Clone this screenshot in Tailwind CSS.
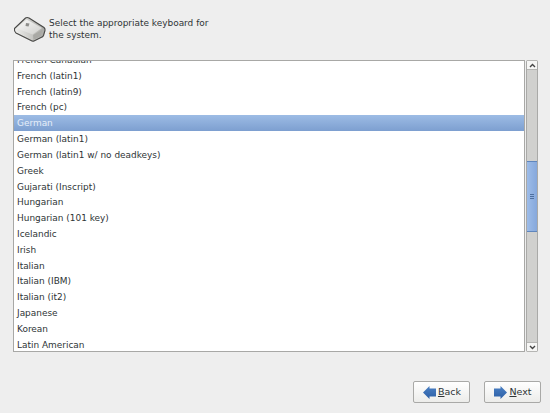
<!DOCTYPE html>
<html lang="en">
<head>
  <meta charset="UTF-8">
  <title>Keyboard</title>
  <script src="https://cdn.jsdelivr.net/npm/@tailwindcss/browser@4"></script>
</head>
<body class="bg-[#eeeeee] w-[550px] h-[413px] overflow-hidden font-['DejaVu_Sans',sans-serif] text-[8.95px] text-[#2e3436]">

  <!-- Header -->
  <div class="h-[60px] pl-[13px] pt-[15px] flex items-start">
    <svg width="34" height="28" viewBox="0 0 34 28" class="shrink-0">
      <defs>
        <linearGradient id="cap" x1="0" y1="0" x2="1" y2="1">
          <stop offset="0" stop-color="#fafafa"/>
          <stop offset="1" stop-color="#cfcfcc"/>
        </linearGradient>
        <linearGradient id="side" x1="0" y1="0" x2="1" y2="0">
          <stop offset="0" stop-color="#f0f0ee"/>
          <stop offset="1" stop-color="#a8a8a4"/>
        </linearGradient>
      </defs>
      <path d="M1.500 13.500 L12.500 3 Q14 2 16 3 L31 12.500 Q32.500 14 32 15.500 L30.500 20.500 Q30 22 28 22.500 L21 26 Q19.500 26.500 18 25.500 L3 18 Q1 16.500 1.500 13.500 Z" fill="url(#side)" stroke="#474745" stroke-width="1.100"/>
      <path d="M4 13.500 L13.500 4.500 L29 13 L19.500 19.500 Z" fill="url(#cap)"/>
      <path d="M20 20 L29.500 14.500 L28 21 L20.500 25 Z" fill="#a9a9a5"/>
      <path d="M13 8 L16.500 8.500 L15.500 11.500 L12.500 11 Z" fill="#8e8e8b"/>
    </svg>
    <p class="ml-[2px] w-[170px] leading-[12px] pt-[2px]">Select the appropriate keyboard for the system.</p>
  </div>

  <!-- List with scrollbar -->
  <div class="flex h-[292px] ml-[13px]">
    <div class="w-[512px] h-[292px] bg-white border border-[#a8a8a6] overflow-hidden">
      <ul class="-mt-[9px] leading-[17.4px] *:h-[15.82px] *:pl-[3px]">
        <li>French Canadian</li>
        <li>French (latin1)</li>
        <li>French (latin9)</li>
        <li>French (pc)</li>
        <li class="bg-gradient-to-b from-[#9dbce5] to-[#7d9fd0] text-[#e6eef9]">German</li>
        <li>German (latin1)</li>
        <li>German (latin1 w/ no deadkeys)</li>
        <li>Greek</li>
        <li>Gujarati (Inscript)</li>
        <li>Hungarian</li>
        <li>Hungarian (101 key)</li>
        <li>Icelandic</li>
        <li>Irish</li>
        <li>Italian</li>
        <li>Italian (IBM)</li>
        <li>Italian (it2)</li>
        <li>Japanese</li>
        <li>Korean</li>
        <li>Latin American</li>
      </ul>
    </div>
    <div class="ml-[1px] w-[12px] h-[292px] bg-[#d0d0ce] border-x border-[#a9a9a7] rounded-[2px] flex flex-col">
      <div class="h-[10px] bg-[#f6f6f5] border-y border-[#b5b5b3] flex items-center justify-center">
        <svg width="7" height="5" viewBox="0 0 7 5"><path d="M1 4 L3.500 1.500 L6 4" fill="none" stroke="#444" stroke-width="1.400"/></svg>
      </div>
      <div class="h-[91px]"></div>
      <div class="h-[71px] bg-gradient-to-r from-[#9dbce8] to-[#86a8dc] border-y border-[#5f86bd] flex flex-col items-center justify-center gap-[1px]">
        <span class="w-[4px] h-px bg-[#4e6f9f]"></span>
        <span class="w-[4px] h-px bg-[#4e6f9f]"></span>
        <span class="w-[4px] h-px bg-[#4e6f9f]"></span>
      </div>
      <div class="flex-1"></div>
      <div class="h-[10px] bg-[#f6f6f5] border-y border-[#b5b5b3] flex items-center justify-center">
        <svg width="7" height="5" viewBox="0 0 7 5"><path d="M1 1 L3.500 3.500 L6 1" fill="none" stroke="#444" stroke-width="1.400"/></svg>
      </div>
    </div>
  </div>

  <!-- Buttons -->
  <div class="flex justify-end gap-[14px] pr-[9px] pt-[29px]">
    <button class="w-[57px] h-[22px] bg-gradient-to-b from-white to-[#ececea] border border-[#a9a9a7] rounded-[2px] flex items-center justify-center gap-[1px] text-[9.5px]">
      <svg width="15" height="15" viewBox="0 0 15 15">
        <defs>
          <linearGradient id="arrow" x1="0" y1="0" x2="0" y2="1">
            <stop offset="0" stop-color="#4a80c4"/>
            <stop offset="1" stop-color="#2c5fa6"/>
          </linearGradient>
        </defs>
        <path d="M1 7.500 L7.500 1 V3.500 H14 V11.500 H7.500 V14 Z" fill="url(#arrow)"/>
      </svg>
      <span><u>B</u>ack</span>
    </button>
    <button class="w-[57px] h-[22px] bg-gradient-to-b from-white to-[#ececea] border border-[#a9a9a7] rounded-[2px] flex items-center justify-center gap-[1px] text-[9.5px]">
      <svg width="15" height="15" viewBox="0 0 15 15"><path d="M14 7.500 L7.500 1 V3.500 H1 V11.500 H7.500 V14 Z" fill="url(#arrow)"/></svg>
      <span><u>N</u>ext</span>
    </button>
  </div>

</body>
</html>
